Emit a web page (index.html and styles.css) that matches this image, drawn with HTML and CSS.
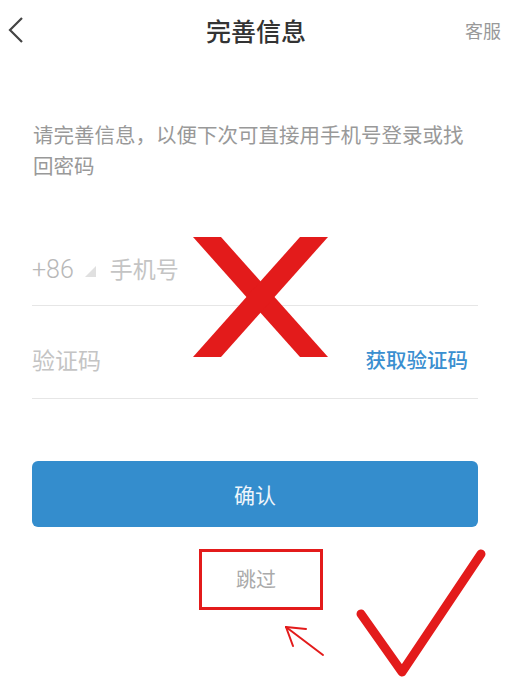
FILE: index.html
```html
<!DOCTYPE html>
<html lang="zh-CN">
<head>
    <meta charset="UTF-8" />
    <meta name="viewport" content="width=device-width, initial-scale=1.0"/>
    <title>完善信息</title>
    <link rel="stylesheet" href="styles.css">
</head>
<body>
    <div class="page">
        <header class="topbar">
            <div class="back">
                <svg width="18" height="28" viewBox="0 0 18 28">
                    <polyline points="15,2 3,14 15,26" fill="none" stroke="#444" stroke-width="2.2" />
                </svg>
            </div>
            <h1>完善信息</h1>
            <div class="service">客服</div>
        </header>

        <p class="intro">请完善信息，以便下次可直接用手机号登录或找回密码</p>

        <div class="form">
            <div class="row phone-row">
                <span class="area">+86</span>
                <span class="tri"></span>
                <span class="placeholder">手机号</span>
            </div>
            <div class="row code-row">
                <span class="placeholder">验证码</span>
                <span class="get-code">获取验证码</span>
            </div>
        </div>

        <button class="confirm">确认</button>

        <div class="skip">跳过</div>

        <!-- annotations drawn over the screenshot -->
        <svg class="marks" width="512" height="695" viewBox="0 0 512 695">
            <polygon points="193,237 221,237 328,357 300,357" fill="#e31b1b" />
            <polygon points="300,237 328,237 221,357 193,357" fill="#e31b1b" />
            <rect x="200.5" y="550.5" width="121" height="58" fill="none" stroke="#e31b1b" stroke-width="3" />
            <g stroke="#e31b1b" stroke-width="2" stroke-linecap="round" fill="none">
                <line x1="323" y1="655" x2="286" y2="627" />
                <line x1="286" y1="627" x2="306" y2="629" />
                <line x1="286" y1="627" x2="293" y2="646" />
            </g>
            <polyline points="361,614 402,672 481,554" fill="none" stroke="#e31b1b" stroke-width="9" stroke-linecap="round" stroke-linejoin="round" />
        </svg>
    </div>
</body>
</html>
```

FILE: styles.css
```css
body {
    margin: 0;
    background-color: #ffffff;
    font-family: "Noto Sans CJK SC", "Noto Sans", sans-serif;
}

.page {
    position: relative;
    width: 512px;
    height: 695px;
    overflow: hidden;
}

.topbar {
    display: grid;
    grid-template-columns: 1fr auto 1fr;
    align-items: center;
    height: 60px;
}

.back {
    padding-left: 7px;
    display: flex;
    align-items: center;
}

.topbar h1 {
    margin: 0;
    font-size: 25px;
    font-weight: 500;
    color: #333;
}

.service {
    text-align: right;
    padding-right: 11px;
    font-size: 18px;
    color: #999;
}

.intro {
    margin: 59px 40px 0 33px;
    font-size: 20.5px;
    line-height: 31px;
    color: #999;
}

.form {
    margin: 34px 34px 0 32px;
}

.row {
    display: flex;
    align-items: center;
    border-bottom: 1px solid #e6e6e6;
    line-height: 30px;
}

.phone-row {
    padding: 36px 0 20px;
}

.code-row {
    padding: 38px 0 24px;
    justify-content: space-between;
}

.area {
    padding-top: 4px;
    font-family: Roboto, sans-serif;
    font-weight: 300;
    font-size: 25px;
    color: #b8b8b8;
}

.tri {
    width: 0;
    height: 0;
    margin: 6px 14px 0 11px;
    border-left: 11px solid transparent;
    border-bottom: 11px solid #e0e0e0;
}

.placeholder {
    font-size: 23px;
    color: #c4c4c4;
}

.get-code {
    font-size: 20.5px;
    font-weight: 500;
    color: #3a8fd0;
    margin-right: 10px;
}

.confirm {
    display: block;
    width: 446px;
    height: 66px;
    margin: 62px 0 0 32px;
    background-color: #348dcd;
    border: none;
    border-radius: 6px;
    color: #eef5fb;
    font-family: "Noto Sans CJK SC", sans-serif;
    font-size: 21px;
}

.skip {
    margin-top: 37px;
    text-align: center;
    font-size: 20px;
    color: #aaa;
}

.marks {
    position: absolute;
    top: 0;
    left: 0;
    pointer-events: none;
}
```
